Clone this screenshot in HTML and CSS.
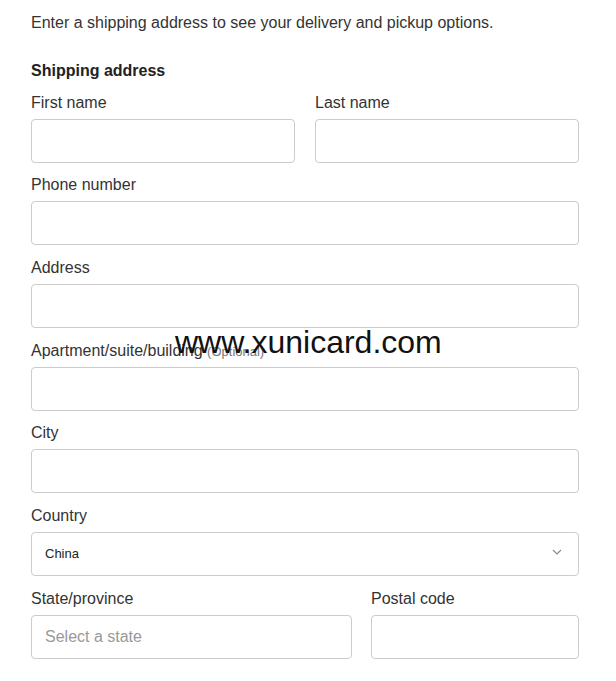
FILE: index.html
```html
<!DOCTYPE html>
<html>
<head>
<meta charset="utf-8">
<link rel="stylesheet" href="styles.css">
</head>
<body>
<div class="page">
  <p class="intro">Enter a shipping address to see your delivery and pickup options.</p>
  <h2 class="section-title">Shipping address</h2>
  <div class="row">
    <div class="field half">
      <label class="label">First name</label>
      <div class="input"></div>
    </div>
    <div class="field half">
      <label class="label">Last name</label>
      <div class="input"></div>
    </div>
  </div>
  <div class="field">
    <label class="label">Phone number</label>
    <div class="input"></div>
  </div>
  <div class="field">
    <label class="label">Address</label>
    <div class="input"></div>
  </div>
  <div class="field">
    <label class="label">Apartment/suite/building <span class="optional">(Optional)</span></label>
    <div class="input"></div>
  </div>
  <div class="field">
    <label class="label">City</label>
    <div class="input"></div>
  </div>
  <div class="field">
    <label class="label">Country</label>
    <div class="input select">
      <span class="value">China</span>
      <svg class="chevron" width="10" height="6" viewBox="0 0 10 6"><path d="M1 1 L5 5 L9 1" fill="none" stroke="#888" stroke-width="1.1"/></svg>
    </div>
  </div>
  <div class="row row-tight">
    <div class="field state">
      <label class="label">State/province</label>
      <div class="input"><span class="placeholder">Select a state</span></div>
    </div>
    <div class="field postal">
      <label class="label">Postal code</label>
      <div class="input"></div>
    </div>
  </div>
  <div class="watermark">www.xunicard.com</div>
</div>
</body>
</html>
```
FILE: styles.css
```css
* { box-sizing: border-box; }
html, body { margin: 0; padding: 0; background: #fff; }
body { font-family: "Liberation Sans", Arial, sans-serif; color: #333; }
.page { position: relative; padding: 13px 37px 0 31px; }
.intro { margin: 0; font-size: 16px; line-height: 20px; color: #333; }
.section-title { margin: 28px 0 -1px; font-size: 16px; line-height: 20px; font-weight: bold; color: #222; }
.row { display: flex; gap: 20px; }
.row-tight { gap: 19px; }
.field { display: flex; flex-direction: column; margin-top: 12.67px; }
.row .field.half { flex: 1; }
.row .field.state { flex: 0 0 321px; }
.row .field.postal { flex: 1; }
.label { display: block; height: 20px; font-size: 16px; line-height: 20px; margin-bottom: 6px; color: #333; }
.optional { font-size: 13px; line-height: 13px; color: #777; }
.input { height: 44px; border: 1px solid #ccc; border-radius: 4px; display: flex; align-items: center; padding: 0 14px 0 13px; }
.select { justify-content: space-between; }
.value { font-size: 13px; color: #222; }
.placeholder { font-size: 16px; color: #999; }
.chevron { margin-right: 2px; margin-top: -3px; }
.watermark { position: absolute; left: 175px; top: 322px; font-size: 32px; line-height: 40px; color: #111; }
```
